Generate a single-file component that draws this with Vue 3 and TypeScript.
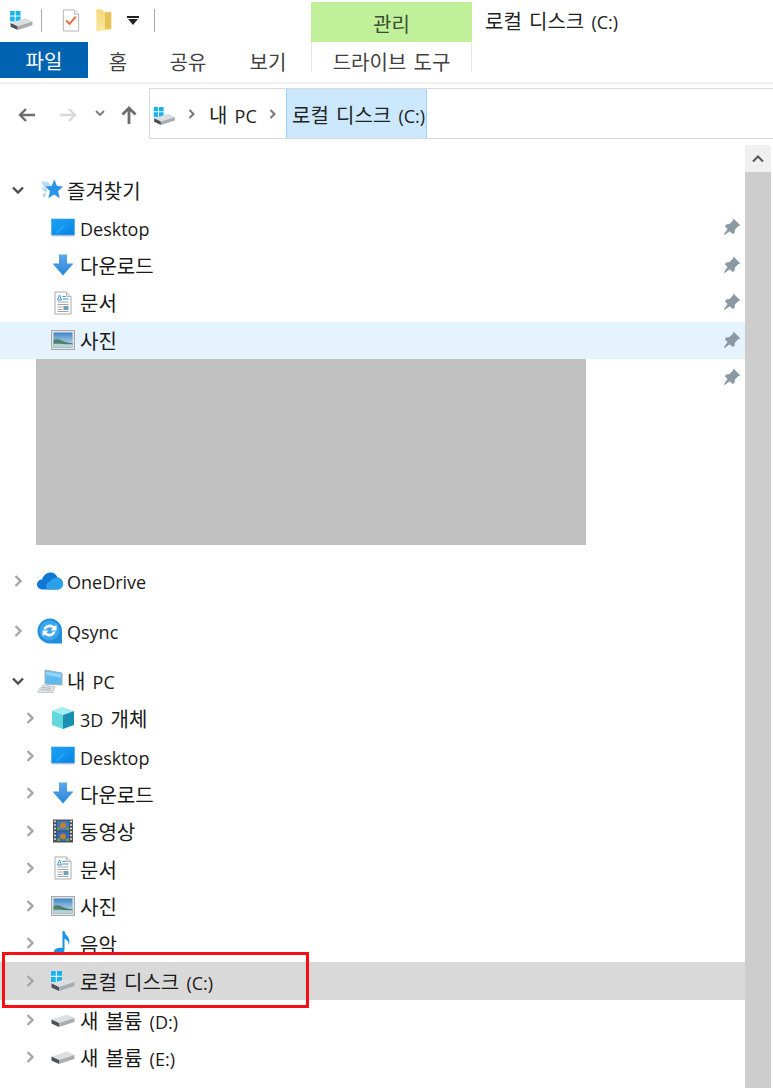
<script setup lang="ts">
interface Row {
  label?: string;
  icon?: string;
  level: number;
  chev?: "open" | "closed";
  pin?: boolean;
  cls?: string;
}

const favorites: Row[] = [
  { label: "즐겨찾기", icon: "star", level: 0, chev: "open" },
  { label: "Desktop", icon: "desktop", level: 1, pin: true },
  { label: "다운로드", icon: "download", level: 1, pin: true },
  { label: "문서", icon: "doc", level: 1, pin: true },
  { label: "사진", icon: "photo", level: 1, pin: true, cls: "hover" },
];

const places: Row[] = [
  { label: "OneDrive", icon: "cloud", level: 0, chev: "closed", cls: "onedrive" },
  { label: "Qsync", icon: "qsync", level: 0, chev: "closed", cls: "qsync" },
  { label: "내 PC", icon: "pc", level: 0, chev: "open", cls: "mypc" },
  { label: "3D 개체", icon: "cube", level: 1, chev: "closed" },
  { label: "Desktop", icon: "desktop", level: 1, chev: "closed" },
  { label: "다운로드", icon: "download", level: 1, chev: "closed" },
  { label: "동영상", icon: "video", level: 1, chev: "closed" },
  { label: "문서", icon: "doc", level: 1, chev: "closed" },
  { label: "사진", icon: "photo", level: 1, chev: "closed" },
  { label: "음악", icon: "music", level: 1, chev: "closed" },
  { label: "로컬 디스크 (C:)", icon: "cdrive", level: 1, chev: "closed", cls: "selected" },
  { label: "새 볼륨 (D:)", icon: "drive", level: 1, chev: "closed", cls: "vol" },
  { label: "새 볼륨 (E:)", icon: "drive", level: 1, chev: "closed" },
];

// latin runs are set a little smaller than the hangul, like Segoe next to Malgun Gothic
function runs(text: string) {
  return text.split(/([A-Za-z0-9():]+)/).filter(Boolean).map((t) => ({
    text: t,
    latin: /[A-Za-z0-9]|:/.test(t),
  }));
}
</script>

<template>
  <svg class="defs" aria-hidden="true">
    <defs>
      <linearGradient id="g-blue" x1="0" y1="0" x2="0" y2="1">
        <stop offset="0" stop-color="#5aa9ea" />
        <stop offset="1" stop-color="#2b86dc" />
      </linearGradient>
      <linearGradient id="g-desk" x1="0" y1="0" x2="1" y2="1">
        <stop offset="0" stop-color="#1aa3f5" />
        <stop offset="1" stop-color="#0a84e6" />
      </linearGradient>
      <linearGradient id="g-sky" x1="0" y1="0" x2="0" y2="1">
        <stop offset="0" stop-color="#3f86c8" />
        <stop offset="1" stop-color="#d6e8ef" />
      </linearGradient>
      <linearGradient id="g-folder" x1="0" y1="0" x2="0" y2="1">
        <stop offset="0" stop-color="#f4d774" />
        <stop offset="1" stop-color="#fbe9a8" />
      </linearGradient>
    </defs>
    <symbol id="i-star" viewBox="0 0 24 24">
      <path d="M4 4l7 1 2 4-7 0zM4 10l5 0 0 4-3-1zM5 16l3-2 0 4-2 1z" fill="#b5dbf8" />
      <path d="M16 2l2.400 6.300 5.600.5-4.500 4.100 1.500 6.800-5.200-3.500-5.400 3.500 1.600-6.800-4.500-4.100 6-.5z" fill="#2b93e8" />
    </symbol>
    <symbol id="i-desktop" viewBox="0 0 24 24">
      <rect x="0.500" y="3" width="23" height="16" fill="url(#g-desk)" stroke="#3d9fe6" stroke-width="0.600" />
      <path d="M1 19h22v1.400H1z" fill="#a9c3d6" />
      <path d="M4 17l8-8 3 0-8 8z" fill="#35b1fb" opacity="0.550" />
    </symbol>
    <symbol id="i-download" viewBox="0 0 24 24">
      <path d="M8 1.500h8v9h6.500L12 22.500 1.500 10.500H8z" fill="url(#g-blue)" />
    </symbol>
    <symbol id="i-doc" viewBox="0 0 24 24">
      <path d="M4 1h11.500L20 5.500V23H4z" fill="#fff" stroke="#a9a9a9" />
      <path d="M15.500 1v4.500H20" fill="#e3e3e3" stroke="#a9a9a9" stroke-width="0.800" />
      <path d="M6.500 9l2-5 2 5zM11.500 5.500h3M11.500 8h6" stroke="#3d8fd8" stroke-width="1" fill="none" />
      <path d="M6.500 11h11M6.500 13.500h11M6.500 16h5M6.500 18.500h5M6.500 20.500h11" stroke="#9a9a9a" stroke-width="0.900" />
      <rect x="12.500" y="15" width="5" height="4" fill="#6f9fbb" />
    </symbol>
    <symbol id="i-photo" viewBox="0 0 24 24">
      <rect x="0.500" y="2.500" width="23" height="19" fill="#e3e3e3" stroke="#a8a8a8" />
      <rect x="2.500" y="4.500" width="19" height="15" fill="url(#g-sky)" />
      <path d="M2.500 12c5-2 8 1 12 2s5 1 7 1v4.500h-19z" fill="#4e7f6c" />
      <path d="M2.500 16c6-1 12 1 19 0v3.500h-19z" fill="#b9d3dd" />
    </symbol>
    <symbol id="i-cloud" viewBox="0 0 26 18">
      <path d="M6 17.500C2 17.500 0 15 0 12.500 0 9.500 2.500 7.500 5 7.500 6.500 3 10 .5 13.500 .5c3.500 0 6 2 7 5 3 .5 5.500 3 5.500 6 0 3.500-2.500 6-6 6z" fill="#0f78d4" />
      <path d="M10 17.500H20c3.500 0 6-2.500 6-6 0-3-2.500-5.500-5.500-6-4 0-6 2-7.500 4-3 .5-5 3-3 8z" fill="#2aa0ea" />
    </symbol>
    <symbol id="i-qsync" viewBox="0 0 26 26">
      <path d="M13 0.500a12.500 12.500 0 1 0 0 25h12V13A12.500 12.500 0 0 0 13 .5z" fill="#1e8fe0" />
      <circle cx="12.500" cy="12.500" r="10" fill="#3ba6ee" />
      <path d="M6.500 11.500a6.500 6.500 0 0 1 11-3l2-2v6h-6l2-2a4 4 0 0 0-6.500 1z" fill="#fff" />
      <path d="M18.500 13.500a6.500 6.500 0 0 1-11 3l-2 2v-6h6l-2 2a4 4 0 0 0 6.500-1z" fill="#fff" />
    </symbol>
    <symbol id="i-pc" viewBox="0 0 26 24">
      <path d="M8 1l17 3v12L8 15z" fill="#5db8ec" stroke="#9cb4c4" stroke-width="1" />
      <path d="M9 2.500l15 2.600v4L9 6z" fill="#8fd3f7" />
      <path d="M6 16l12 1.500L16 23.500H2c-1.500 0-2-1-1-2z" fill="#dfe3e6" stroke="#b5bcc2" stroke-width="0.700" />
      <path d="M5 18.500l9 .8M4 20.500l10 .7" stroke="#a3abb2" stroke-width="0.800" />
    </symbol>
    <symbol id="i-cube" viewBox="0 0 24 24">
      <path d="M12 1L1 5v14l11 4z" fill="#62d8dc" />
      <path d="M1 5l11-4 11 4-11 4z" fill="#a3eef0" />
      <path d="M12 9v14l11-4V5z" fill="#1a8fb0" />
    </symbol>
    <symbol id="i-video" viewBox="0 0 24 24">
      <rect x="2" y="0.500" width="20" height="23" fill="#4b5358" />
      <rect x="6" y="2" width="12" height="9.500" fill="#3a78c4" />
      <rect x="6" y="12.500" width="12" height="9.500" fill="#2f68bc" />
      <circle cx="12" cy="6.500" r="3" fill="#c2812f" />
      <circle cx="12" cy="17.500" r="3" fill="#c2812f" />
      <path d="M6 9l3-1 0 3H6zM15 9l3-1v3h-3zM6 20l3-1v3H6zM15 20l3-1v3h-3z" fill="#5da34a" />
      <path d="M3 2.500h2M3 6h2M3 9.500h2M3 13h2M3 16.500h2M3 20h2M19 2.500h2M19 6h2M19 9.500h2M19 13h2M19 16.500h2M19 20h2" stroke="#dfe3e6" stroke-width="1.400" />
    </symbol>
    <symbol id="i-music" viewBox="0 0 24 24">
      <path d="M11.500 0h2c.5 3 2 4 3.500 6s2 5 .5 8c.3-3-1-5-4-6.500V19c0 2.500-3 4.500-6.500 4.500-3 0-4.500-1.500-4-3.500.5-2.500 4-4 8.500-3z" fill="#1c94e8" />
    </symbol>
    <symbol id="i-cdrive" viewBox="0 0 24 20">
      <path d="M0 11h11V0H0z" fill="#19b4ef" />
      <path d="M5.300 0v11M0 5.300h11" stroke="#fff" stroke-width="1" />
      <path d="M.5 12.500L16 7.500l7.500 3.500L8 16z" fill="#dcdfe1" />
      <path d="M.5 12.500L8 16v4L.5 16.500z" fill="#4c5155" />
      <path d="M8 16l15.500-5v4L8 20z" fill="#a9adb0" />
    </symbol>
    <symbol id="i-drive" viewBox="0 0 24 14">
      <path d="M.5 6.500L16 1.500 23.500 5 8 10z" fill="#dcdfe1" />
      <path d="M.5 6.500L8 10v4L.5 10.500z" fill="#4c5155" />
      <path d="M8 10l15.500-5v4L8 14z" fill="#a9adb0" />
    </symbol>
    <symbol id="i-pin" viewBox="0 0 18 18">
      <path d="M10.500 .5l7 7-2 .5-3.500 3.500-.5 3.500-2 1-2.800-2.800L1.500 17 .8 16.300l3.800-5.200L2 8.500 3 6.500l3.500-.5L10 2.500z" fill="#8a9aa5" />
    </symbol>
    <symbol id="i-check" viewBox="0 0 18 24">
      <path d="M1 1h11.500L17 5.500V23H1z" fill="#fff" stroke="#b3b3b3" />
      <path d="M12.500 1v4.500H17" fill="#ececec" stroke="#b3b3b3" stroke-width="0.800" />
      <path d="M4 12l3.500 3.500L14 8" fill="none" stroke="#e8693a" stroke-width="2" />
    </symbol>
    <symbol id="i-folder" viewBox="0 0 16 24">
      <path d="M0 0.500h6l2 3h6V2l1.500 .5V21L3 23.500H0z" fill="url(#g-folder)" />
      <path d="M9 3.500h6.500V21H9z" fill="#e9c254" />
    </symbol>
  </svg>

  <div class="window">
    <header class="ribbon">
      <div class="qat-line">
        <div class="qat">
          <svg class="qi-drive"><use href="#i-cdrive" /></svg>
          <span class="sep first"></span>
          <svg class="qi-check"><use href="#i-check" /></svg>
          <svg class="qi-folder"><use href="#i-folder" /></svg>
          <span class="drop"></span>
          <span class="sep last"></span>
        </div>
        <div class="context">관리</div>
        <div class="title">
          <span v-for="r in runs('로컬 디스크 (C:)')" :key="r.text" :class="{ latin: r.latin }">{{ r.text }}</span>
        </div>
      </div>
      <div class="tab-line">
        <div class="tab file">파일</div>
        <div class="tab home">홈</div>
        <div class="tab share">공유</div>
        <div class="tab view">보기</div>
        <div class="tab tools">드라이브 도구</div>
      </div>
    </header>

    <nav class="navbar">
      <div class="buttons">
        <svg class="nav-arrow" viewBox="0 0 18 14"><path d="M17 7H2M8 1L2 7l6 6" fill="none" stroke="#6d6d6d" stroke-width="2.400" /></svg>
        <svg class="nav-arrow fwd" viewBox="0 0 18 14"><path d="M1 7h15M10 1l6 6-6 6" fill="none" stroke="#d8d8d8" stroke-width="2.400" /></svg>
        <svg class="nav-down" viewBox="0 0 10 6"><path d="M1 1l4 4 4-4" fill="none" stroke="#808080" stroke-width="2" /></svg>
        <svg class="nav-up" viewBox="0 0 16 18"><path d="M8 18V2M1.500 8.500L8 2l6.500 6.500" fill="none" stroke="#6d6d6d" stroke-width="2.800" /></svg>
      </div>
      <div class="address">
        <svg class="addr-drive"><use href="#i-cdrive" /></svg>
        <svg class="crumb-sep sep-a" viewBox="0 0 7 10"><path d="M1.500 1l4 4-4 4" fill="none" stroke="#777" stroke-width="2" /></svg>
        <span class="crumb mine">
          <span v-for="r in runs('내 PC')" :key="r.text" :class="{ latin: r.latin }">{{ r.text }}</span>
        </span>
        <svg class="crumb-sep" viewBox="0 0 7 10"><path d="M1.500 1l4 4-4 4" fill="none" stroke="#777" stroke-width="2" /></svg>
        <span class="crumb current">
          <span v-for="r in runs('로컬 디스크 (C:)')" :key="r.text" :class="{ latin: r.latin }">{{ r.text }}</span>
        </span>
      </div>
    </nav>

    <div class="body">
      <main class="tree">
        <div v-for="row in favorites" :key="row.label" class="row" :class="['lv' + row.level, row.cls]">
          <svg v-if="row.chev === 'open'" class="chev" viewBox="0 0 12 8"><path d="M1 1.500l5 5 5-5" fill="none" stroke="#4d4d4d" stroke-width="2.400" /></svg>
          <span v-else class="chev"></span>
          <svg class="icon" :class="'ic-' + row.icon"><use :href="'#i-' + row.icon" /></svg>
          <span class="label">
            <span v-for="r in runs(row.label!)" :key="r.text" :class="{ latin: r.latin }">{{ r.text }}</span>
          </span>
          <svg v-if="row.pin" class="pin"><use href="#i-pin" /></svg>
        </div>

        <div class="redacted">
          <div class="block"></div>
          <svg class="pin"><use href="#i-pin" /></svg>
        </div>

        <div class="places">
          <div v-for="row in places" :key="row.label + row.icon + row.cls" class="row" :class="['lv' + row.level, row.cls]">
            <svg v-if="row.chev === 'open'" class="chev" viewBox="0 0 12 8"><path d="M1 1.500l5 5 5-5" fill="none" stroke="#4d4d4d" stroke-width="2.400" /></svg>
            <svg v-else class="chev shut" viewBox="0 0 8 12"><path d="M1.500 1l5 5-5 5" fill="none" stroke="#a6a6a6" stroke-width="2.400" /></svg>
            <svg class="icon" :class="'ic-' + row.icon"><use :href="'#i-' + row.icon" /></svg>
            <span class="label">
              <span v-for="r in runs(row.label!)" :key="r.text" :class="{ latin: r.latin }">{{ r.text }}</span>
            </span>
          </div>
        </div>

        <div class="marker"></div>
      </main>

      <aside class="scrollbar">
        <div class="scroll-btn">
          <svg viewBox="0 0 12 8"><path d="M1 6.500l5-5 5 5" fill="none" stroke="#555" stroke-width="2" /></svg>
        </div>
        <div class="thumb"></div>
      </aside>
    </div>
  </div>
</template>

<style scoped>
.defs {
  position: absolute;
  width: 0;
  height: 0;
}

.window {
  width: 773px;
  height: 1088px;
  overflow: hidden;
  background: #fff;
  color: #1a1a1a;
  font-family: "Open Sans", "Noto Sans CJK KR", sans-serif;
  font-size: 20px;
  word-spacing: 2px;
  display: flex;
  flex-direction: column;
}

.latin {
  font-size: 18px;
}

.ribbon {
  height: 84px;
  box-sizing: border-box;
  border-bottom: 2px solid #f0f0f0;
  flex-shrink: 0;
}

.qat-line {
  height: 42px;
  display: flex;
  box-sizing: border-box;
  padding-top: 2px;
}

.qat {
  width: 311px;
  display: flex;
  align-items: center;
  padding: 0 0 4px 10px;
  box-sizing: border-box;
}

.qi-drive {
  width: 23px;
  height: 19px;
}

.sep {
  width: 1px;
  height: 23px;
  background: #a8a8a8;
}

.sep.first {
  margin-left: 8px;
}

.sep.last {
  margin-left: 15px;
}

.qi-check {
  width: 18px;
  height: 23px;
  margin-left: 20px;
}

.qi-folder {
  width: 16px;
  height: 23px;
  margin-left: 16px;
}

.drop {
  width: 12px;
  height: 9px;
  margin-left: 15px;
  box-sizing: border-box;
  border-top: 2px solid #222;
  position: relative;
}

.drop::after {
  content: "";
  position: absolute;
  left: 1px;
  top: 1px;
  border-left: 5px solid transparent;
  border-right: 5px solid transparent;
  border-top: 6px solid #222;
}

.context {
  width: 161px;
  background: #c1f09b;
  color: #3c4c34;
  text-align: center;
  line-height: 46px;
}

.title {
  margin-left: 13px;
  line-height: 40px;
  color: #222;
  white-space: nowrap;
}

.tab-line {
  display: flex;
  height: 36px;
  position: relative;
}

.tab {
  line-height: 42px;
  height: 36px;
  color: #404040;
  text-align: center;
}

.tab.file {
  width: 88px;
  background: #0063b1;
  color: #fff;
  line-height: 40px;
}

.tab.home {
  width: 60px;
}

.tab.share {
  width: 80px;
}

.tab.view {
  width: 80px;
}

.tab.tools {
  margin-left: 3px;
  width: 161px;
  height: 30px;
  box-sizing: border-box;
  white-space: nowrap;
  border-left: 1px solid #e6e6e6;
  border-right: 1px solid #e6e6e6;
}

.navbar {
  display: flex;
  height: 51px;
  margin-top: 4px;
  flex-shrink: 0;
}

.buttons {
  width: 149px;
  display: flex;
  align-items: center;
  padding: 2px 0 0 18px;
  box-sizing: border-box;
}

.nav-arrow {
  width: 18px;
  height: 14px;
}

.nav-arrow.fwd {
  margin-left: 23px;
}

.nav-down {
  width: 10px;
  height: 6px;
  margin-left: 18px;
  margin-top: -3px;
}

.nav-up {
  width: 16px;
  height: 18px;
  margin-left: 16px;
}

.address {
  flex: 1;
  display: flex;
  align-items: stretch;
  border: 1px solid #d9d9d9;
  border-right: none;
  box-sizing: border-box;
}

.addr-drive {
  width: 23px;
  height: 18px;
  margin: 18px 0 0 3px;
}

.crumb-sep {
  width: 7px;
  height: 10px;
  align-self: center;
}

.sep-a {
  margin-left: 12px;
}

.crumb {
  line-height: 53px;
  color: #222;
  white-space: nowrap;
}

.crumb.mine {
  width: 74px;
  padding-left: 14px;
  box-sizing: border-box;
}

.crumb.current {
  margin-left: 10px;
  width: 141px;
  box-sizing: border-box;
  background: #cce8ff;
  border: 1px solid #99d1ff;
  border-top: none;
  border-bottom: none;
  padding-left: 5px;
}

.body {
  flex: 1;
  display: flex;
  min-height: 0;
}

.tree {
  width: 745px;
  padding-top: 32.5px;
  box-sizing: border-box;
  position: relative;
}

.row {
  height: 37.5px;
  display: flex;
  align-items: center;
  position: relative;
}

.row.hover {
  background: #e5f3ff;
}

.row.selected {
  background: #d9d9d9;
}

.row.onedrive {
  margin-top: 17px;
}

.row.qsync {
  margin-top: 13px;
}

.row.mypc {
  margin-top: 12px;
}

.row.vol {
  margin-top: 1.500px;
}

.chev {
  flex-shrink: 0;
  width: 12px;
  height: 8px;
}

.chev.shut {
  width: 8px;
  height: 12px;
}

.lv0 .chev {
  margin-left: 12px;
}

.lv0 .chev.shut {
  margin: 0 2px 0 14px;
}

.lv1 .chev {
  margin-left: 26px;
}

.lv1 .chev.shut {
  margin: 0 4px 0 26px;
}

.lv1 span.chev {
  height: 0;
}

.lv0 .icon {
  margin-left: 13px;
  width: 26px;
  height: 26px;
}

.lv1 .icon {
  margin-left: 13px;
  width: 24px;
  height: 24px;
}

.lv0 .label {
  margin-left: 4px;
}

.lv1 .label {
  margin-left: 5px;
}

.label {
  line-height: 37px;
  white-space: nowrap;
  padding-top: 2px;
}

.places .lv1 .label {
  padding-top: 4px;
}

.pin {
  position: absolute;
  right: 4px;
  top: 9px;
  width: 18px;
  height: 18px;
}

.redacted {
  height: 186px;
  position: relative;
}

.block {
  margin-left: 36px;
  width: 550px;
  height: 100%;
  background: #c0c0c0;
}

.marker {
  position: absolute;
  left: 2px;
  top: 813px;
  width: 307px;
  height: 56px;
  box-sizing: border-box;
  border: 3px solid #f50f14;
}

.scrollbar {
  width: 26px;
  margin-top: 6px;
  display: flex;
  flex-direction: column;
}

.scroll-btn {
  height: 27px;
  background: #f0f0f0;
  display: flex;
  align-items: center;
  justify-content: center;
}

.scroll-btn svg {
  width: 12px;
  height: 8px;
}

.thumb {
  flex: 1;
  background: #cdcdcd;
}
</style>
